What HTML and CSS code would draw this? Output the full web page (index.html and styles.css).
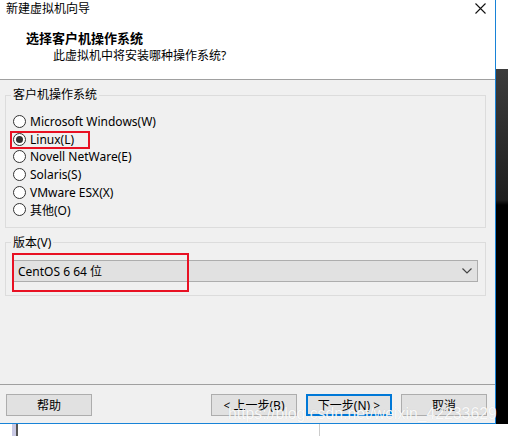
FILE: index.html
```html
<!DOCTYPE html>
<html lang="zh-CN">

<head>
    <meta charset="UTF-8">
    <title>新建虚拟机向导</title>
    <link rel="stylesheet" href="styles.css">
</head>

<body>
    <div class="screen">
        <div class="left">
            <div class="window">
                <div class="top">
                    <div class="titlebar">
                        <span>新建虚拟机向导</span>
                        <svg class="close" width="11" height="11" viewBox="0 0 11 11">
                            <path d="M0.5 0.5 L10.5 10.5 M10.5 0.5 L0.5 10.5" stroke="#111" stroke-width="1.1" fill="none"/>
                        </svg>
                    </div>
                    <div class="header">
                        <h1>选择客户机操作系统</h1>
                        <p>此虚拟机中将安装哪种操作系统?</p>
                    </div>
                </div>

                <div class="body">
                    <fieldset class="group">
                        <legend>客户机操作系统</legend>
                        <div class="radio"><span class="circle"></span>Microsoft Windows(W)</div>
                        <div class="radio checked"><span class="circle"></span>Linux(L)<span class="mark mark-os"></span></div>
                        <div class="radio"><span class="circle"></span>Novell NetWare(E)</div>
                        <div class="radio"><span class="circle"></span>Solaris(S)</div>
                        <div class="radio"><span class="circle"></span>VMware ESX(X)</div>
                        <div class="radio"><span class="circle"></span>其他(O)</div>
                    </fieldset>

                    <fieldset class="group group-ver">
                        <legend>版本(V)</legend>
                        <div class="select">
                            <span>CentOS 6 64 位</span>
                            <svg width="10" height="6" viewBox="0 0 10 6">
                                <path d="M0.5 0.5 L5 5 L9.5 0.5" stroke="#444" stroke-width="1.2" fill="none"/>
                            </svg>
                            <span class="mark mark-ver"></span>
                        </div>
                    </fieldset>
                </div>

                <div class="buttons">
                    <button class="btn help">帮助</button>
                    <button class="btn">&lt; 上一步(B)</button>
                    <button class="btn default">下一步(N) &gt;</button>
                    <button class="btn">取消</button>
                </div>
            </div>
            <div class="below"><span class="bar"></span><span class="thin"></span></div>
        </div>
        <div class="desk"></div>
        <div class="watermark">https://blog.csdn.net/weixin_42233629</div>
    </div>
</body>

</html>
```

FILE: styles.css
```css
* {
    margin: 0;
    padding: 0;
    box-sizing: border-box;
}

body {
    font-family: "Noto Sans", "Noto Sans CJK SC", sans-serif;
    font-size: 12px;
    color: #000;
    background: #fff;
}

.screen {
    position: relative;
    display: flex;
    width: 508px;
    height: 436px;
    overflow: hidden;
}

.left {
    width: 496px;
    display: flex;
    flex-direction: column;
}

.window {
    height: 424px;
    border-right: 1px solid #1883d7;
    border-bottom: 1px solid #1883d7;
    background: #f0f0f0;
    display: flex;
    flex-direction: column;
}

.top {
    background: #fff;
    height: 80px;
    border-bottom: 1px solid #a0a0a0;
}

.titlebar {
    height: 18px;
    line-height: 18px;
    padding-left: 6px;
    display: flex;
    justify-content: space-between;
    align-items: center;
}

.close {
    margin-right: 9px;
    margin-top: -1px;
}

.header {
    padding-top: 12px;
}

.header h1 {
    font-size: 13px;
    font-weight: bold;
    line-height: 16px;
    padding-left: 26px;
}

.header p {
    line-height: 16px;
    margin-top: 2px;
    padding-left: 53px;
}

.body {
    flex: 1;
    padding: 8px 9px 0 5px;
}

.group {
    border: 1px solid #dcdcdc;
    padding: 11px 7px 8px 7px;
}

.group legend {
    line-height: 14px;
    padding: 0 2px;
    margin-left: -2px;
}

.radio {
    position: relative;
    height: 17.6px;
    display: flex;
    align-items: center;
}

.circle {
    width: 13px;
    height: 13px;
    border: 1px solid #333;
    border-radius: 50%;
    background: #fff;
    margin-right: 4px;
    position: relative;
}

.checked .circle::after {
    content: "";
    position: absolute;
    left: 2px;
    top: 2px;
    width: 7px;
    height: 7px;
    border-radius: 50%;
    background: #333;
}

.mark {
    position: absolute;
    border: 2px solid #e81123;
}

.mark-os {
    left: -3px;
    top: 0;
    width: 80px;
    height: 18px;
}

.group-ver {
    margin-top: 8px;
    padding: 10px 7px 13px 7px;
}

.select {
    position: relative;
    height: 22px;
    background: #e1e1e1;
    border: 1px solid #adadad;
    padding: 0 5px 0 4px;
    display: flex;
    justify-content: space-between;
    align-items: center;
}

.mark-ver {
    left: -2px;
    top: -8px;
    width: 177px;
    height: 39px;
}

.buttons {
    height: 39px;
    border-top: 1px solid #a0a0a0;
    padding: 9px 8px 0 6px;
    display: flex;
    gap: 9px;
}

.btn {
    width: 86px;
    height: 22px;
    background: #e1e1e1;
    border: 1px solid #adadad;
    font-family: inherit;
    font-size: 12px;
    color: #000;
}

.btn.help {
    margin-right: auto;
}

.btn.default {
    border: 2px solid #0078d7;
}

.below {
    flex: 1;
    position: relative;
    background: #fff;
}

.below .bar {
    position: absolute;
    left: 12px;
    top: 0;
    width: 6px;
    height: 12px;
    background: #c9c9e4;
    border-right: 2px solid #555;
}

.below .thin {
    position: absolute;
    left: 319px;
    top: 0;
    width: 1px;
    height: 12px;
    background: #ccc;
}

.desk {
    width: 12px;
    background: linear-gradient(#fff 0, #fff 69px, #3c3c3c 69px, #1e1e1e 200px, #000 205px, #000 424px, #fff 424px);
}

.watermark {
    position: absolute;
    left: 228px;
    top: 405px;
    font-family: "Liberation Sans", Arial, sans-serif;
    font-size: 15.8px;
    color: rgba(255, 255, 255, 0.9);
    text-shadow: 0 0 1px rgba(0, 0, 0, 0.12);
    white-space: nowrap;
}
```
